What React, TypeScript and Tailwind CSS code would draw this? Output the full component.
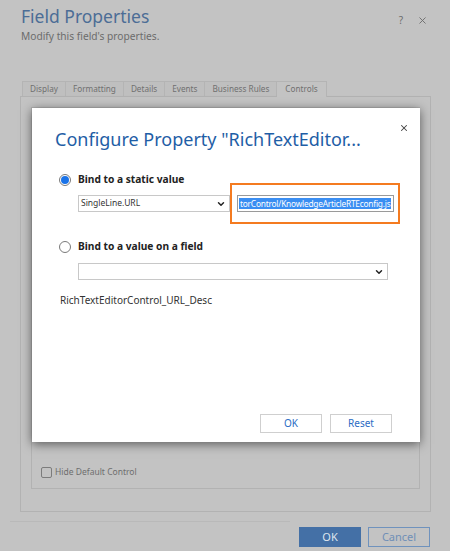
import React from 'react';
import { ChevronDown, X } from 'lucide-react';

const tabs = ['Display', 'Formatting', 'Details', 'Events', 'Business Rules', 'Controls'];

function Radio({ checked }: { checked?: boolean }) {
  return (
    <span className="w-[12px] h-[12px] rounded-full border border-[#7a7a7a] bg-white flex items-center justify-center shrink-0">
      {checked && <span className="w-[8px] h-[8px] rounded-full bg-[#1a73e8]" />}
    </span>
  );
}

function Select({ value, width }: { value: string; width: string }) {
  return (
    <div className={`${width} h-[17px] border border-[#c8c8c8] bg-white flex items-center justify-between pl-[2px] pr-[3px] text-[8.5px] text-[#333]`}>
      <span>{value}</span>
      <ChevronDown className="w-[10px] h-[10px] text-[#222]" strokeWidth={3.5} />
    </div>
  );
}

export default function App() {
  return (
    <div className="relative w-[450px] h-[551px] overflow-hidden bg-[#c3c3c3] font-['Noto_Sans',sans-serif]">
      {/* page header */}
      <div className="flex justify-between pl-[21px] pr-[22px] pt-[4px]">
        <div>
          <h1 className="text-[17.5px] leading-[25px] text-[#4c6d96]">Field Properties</h1>
          <p className="text-[10.2px] leading-[14px] text-[#6c6c6c]">Modify this field's properties.</p>
        </div>
        <div className="flex items-center gap-[14px] h-[30px] mt-[1px] text-[#6c6c6c]">
          <span className="text-[10px]">?</span>
          <X className="w-[11px] h-[11px]" strokeWidth={2} />
        </div>
      </div>

      {/* tabs */}
      <div className="mt-[38px] ml-[20px] w-[411px]">
        <div className="flex pl-[2px]">
          {tabs.map((t, i) =>
          <div
            key={t}
            className={`h-[15px] px-[7px] flex items-center text-[8.2px] text-[#707070] border-[#b4b4b4] border-t border-r ${i === 0 ? 'border-l' : ''} ${i === tabs.length - 1 ? 'bg-[#c3c3c3] h-[16px] -mb-px z-10 px-[8px]' : 'bg-[#bfbfbf]'}`}>
            
              {t}
            </div>
          )}
        </div>
        <div className="h-[416px] border border-[#b2b2b2] px-[10px] pt-[10px]">
          <div className="h-[382px] border border-[#b2b2b2] flex flex-col justify-end px-[9px] pb-[9px]">
            <label className="flex items-center gap-[3px] text-[8.5px] text-[#6e6e6e]">
              <span className="w-[11px] h-[11px] border border-[#7c7c7c] rounded-[2px]" />
              Hide Default Control
            </label>
          </div>
        </div>
      </div>

      {/* footer */}
      <div className="mx-[10px] mt-[9px] h-px w-[280px] bg-[#b9b9b9]" />
      <div className="flex justify-end gap-[7px] pr-[20px] mt-[5px]">
        <button className="w-[62px] h-[20px] bg-[#4470a6] text-[#dfe5ee] text-[11px]">OK</button>
        <button className="w-[62px] h-[20px] border border-[#6f92bd] text-[#6f8fb7] text-[11px]">Cancel</button>
      </div>

      {/* modal */}
      <div className="absolute left-[32px] top-[108px] w-[388px] h-[334px] bg-white shadow-[0_2px_10px_rgba(0,0,0,0.55)] px-[23px] pt-[18px]">
        <X className="absolute right-[11px] top-[15px] w-[10px] h-[10px] text-[#444]" strokeWidth={2.5} />
        <h2 className="text-[18px] leading-[26px] text-[#1f5ea6]">Configure Property "RichTextEditor...</h2>

        <div className="mt-[20px] pl-[4px]">
          <div className="flex items-center gap-[7px] h-[16px]">
            <Radio checked />
            <span className="text-[10.2px] font-bold text-[#222]">Bind to a static value</span>
          </div>
          <div className="flex items-center gap-[4px] mt-[7px] ml-[19px]">
            <Select value="SingleLine.URL" width="w-[152px]" />
            <div className="relative ml-[3px]">
              <div className="absolute -left-[7px] -right-[6px] -top-[12px] -bottom-[12px] border-2 border-[#f47b20]" />
              <div className="w-[157px] h-[17px] border border-[#9a9a9a] bg-white p-[1px] overflow-hidden">
                <div className="whitespace-nowrap text-[8.3px] leading-[13px] tracking-[-0.2px] overflow-hidden">
                  <span className="bg-[#3a8ef2] text-white pl-[1px]">torControl/KnowledgeArticleRTEconfig.js</span>
                </div>
              </div>
            </div>
          </div>

          <div className="flex items-center gap-[7px] h-[16px] mt-[27px]">
            <Radio />
            <span className="text-[10.2px] font-bold text-[#222]">Bind to a value on a field</span>
          </div>
          <div className="mt-[8px] ml-[19px]">
            <Select value="" width="w-[310px]" />
          </div>
        </div>

        <p className="mt-[13px] ml-[5px] text-[10px] text-[#333]">RichTextEditorControl_URL_Desc</p>

        <div className="absolute right-[28px] bottom-[9px] flex gap-[8px]">
          <button className="w-[62px] h-[19px] border border-[#cfcfcf] text-[#2b6cc4] text-[10px]">OK</button>
          <button className="w-[62px] h-[19px] border border-[#cfcfcf] text-[#2b6cc4] text-[10px]">Reset</button>
        </div>
      </div>
    </div>
  );
}
